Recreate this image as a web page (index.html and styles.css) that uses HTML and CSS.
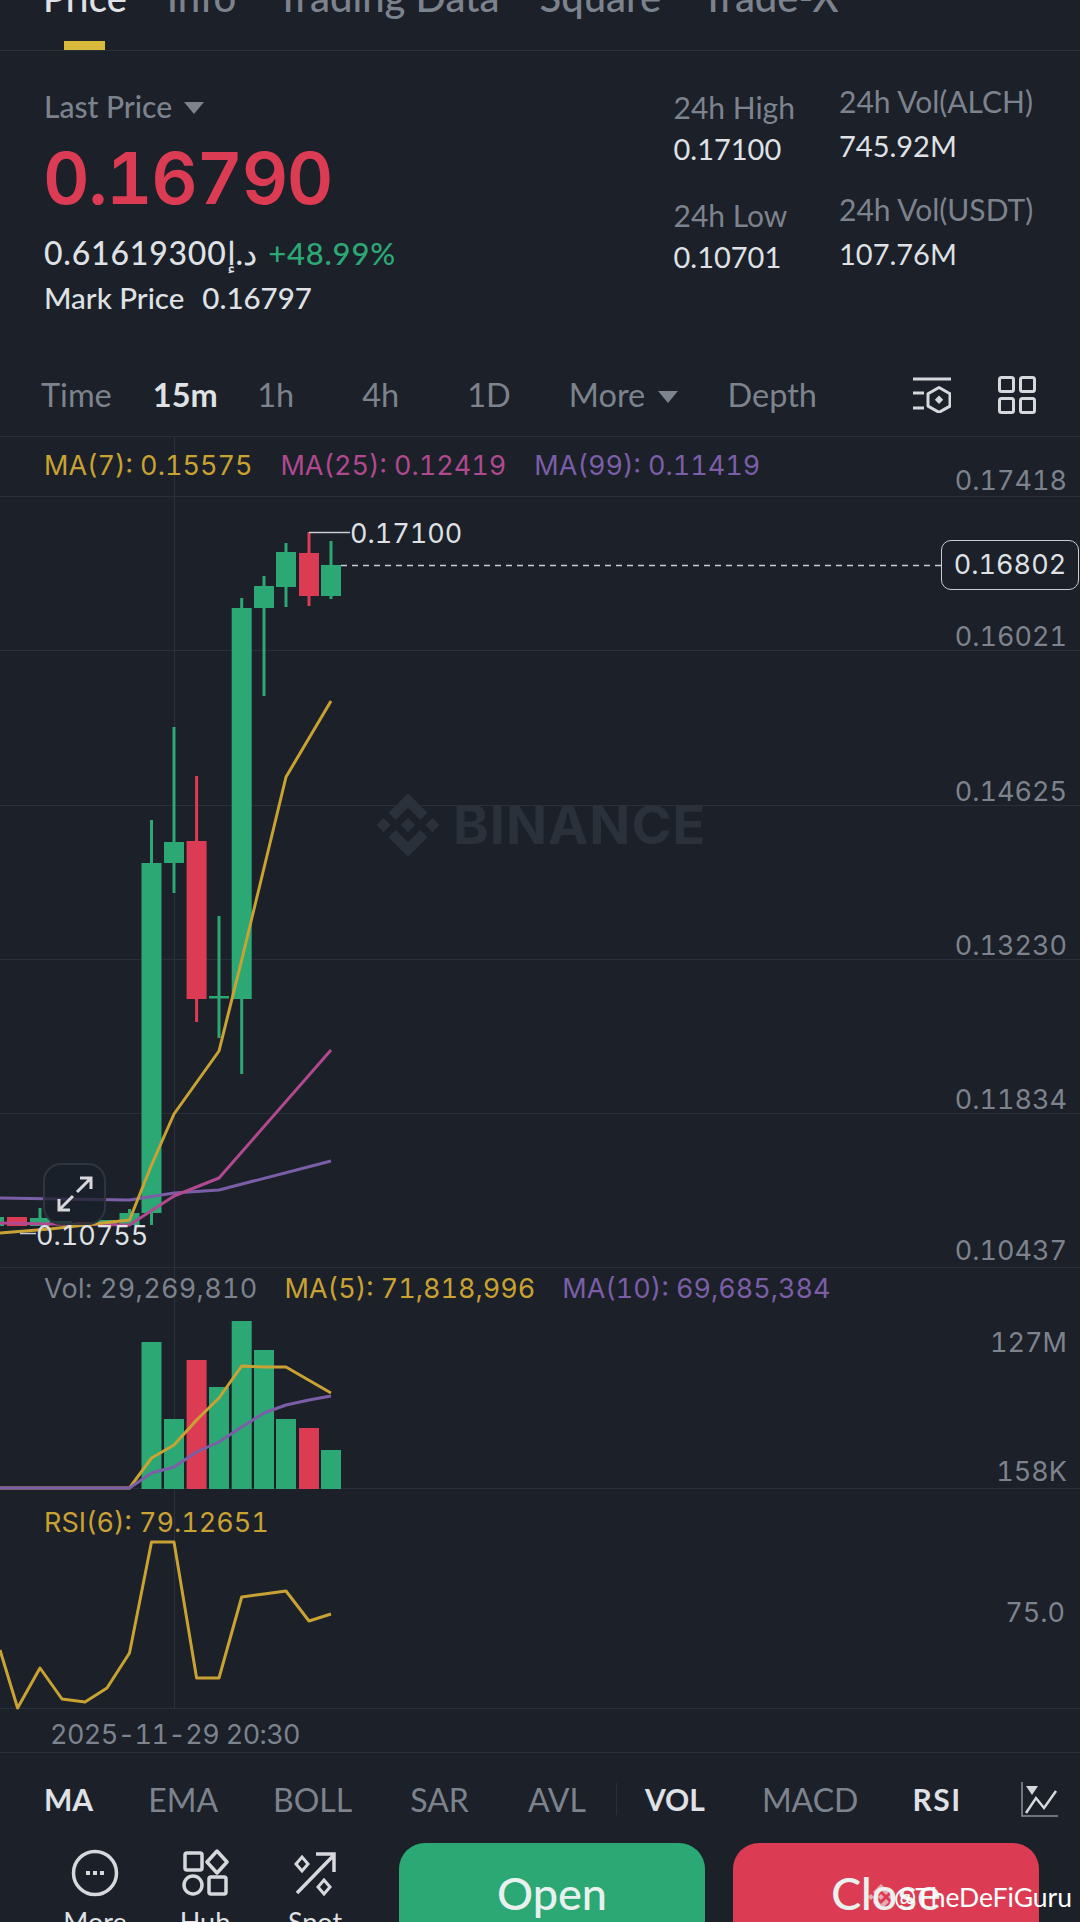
FILE: index.html
```html
<!DOCTYPE html>
<html lang="en">
<head>
  <meta charset="UTF-8">
  <title>ALCH/USDT Price</title>
  <link rel="stylesheet" href="styles.css">
</head>
<body>
  <nav class="tabs">
    <span class="tab active">Price</span>
    <span class="tab">Info</span>
    <span class="tab">Trading Data</span>
    <span class="tab">Square</span>
    <span class="tab">Trade-X</span>
  </nav>

  <section class="ticker">
    <div class="ticker-main">
      <div class="last-label">Last Price <i class="caret"></i></div>
      <div class="last-price">0.16790</div>
      <div class="fiat-row"><span class="fiat-value">0.61619300</span><span class="fiat-cur">د.إ</span><span class="up">+48.99%</span></div>
      <div class="mark-row"><span>Mark Price</span><span>0.16797</span></div>
    </div>
    <div class="stats stats-low">
      <div class="stat"><span class="stat-name">24h High</span><span class="stat-value">0.17100</span></div>
      <div class="stat"><span class="stat-name">24h Low</span><span class="stat-value">0.10701</span></div>
    </div>
    <div class="stats stats-vol">
      <div class="stat"><span class="stat-name">24h Vol(ALCH)</span><span class="stat-value">745.92M</span></div>
      <div class="stat"><span class="stat-name">24h Vol(USDT)</span><span class="stat-value">107.76M</span></div>
    </div>
  </section>

  <div class="intervals">
    <span class="iv iv-time">Time</span>
    <span class="iv iv-15m active">15m</span>
    <span class="iv iv-1h">1h</span>
    <span class="iv iv-4h">4h</span>
    <span class="iv iv-1d">1D</span>
    <span class="iv iv-more">More <i class="caret"></i></span>
    <span class="iv iv-depth">Depth</span>
    <svg class="icon-settings" width="38" height="36" viewBox="0 0 38 36" fill="none" stroke="#d6d8dc" stroke-width="3">
      <path d="M0 2h38M0 16h11M0 31h11"/>
      <path d="M26 10.5l11 6.2v12.4l-11 6.2-11-6.2V16.700z" stroke-linejoin="round"/>
      <path d="M26 18.500l4.200 4.200-4.200 4.200-4.200-4.200z" fill="#d6d8dc" stroke="none"/>
    </svg>
    <svg class="icon-grid" width="38" height="38" viewBox="0 0 38 38" fill="none" stroke="#d6d8dc" stroke-width="3">
      <rect x="1.500" y="1.500" width="14" height="14" rx="2"/>
      <rect x="22.500" y="1.500" width="14" height="14" rx="2"/>
      <rect x="1.500" y="22.500" width="14" height="14" rx="2"/>
      <rect x="22.500" y="22.500" width="14" height="14" rx="2"/>
    </svg>
  </div>

  <section class="chart">
    <!-- chart drawn in page coordinates -->
    <svg class="chart-canvas" width="1080" height="1316" viewBox="0 437 1080 1316">
      <path d="M174.500 437V1709" stroke="#2b313b" stroke-width="1"/>

      <g transform="translate(408 825) scale(.5) translate(-63.300 -63.300)" fill="#2b313b">
        <path d="M38.730 53.200l24.590-24.580 24.600 24.600 14.300-14.310L63.320 0 24.420 38.900zM0 63.310l14.300-14.310 14.310 14.310-14.310 14.300zM38.730 73.410l24.590 24.590 24.600-24.600 14.310 14.290-38.900 38.910-38.910-38.880-.02-.02zM98 63.310l14.300-14.310 14.310 14.300-14.310 14.320zM77.830 63.300L63.320 48.780 52.590 59.510l-1.240 1.230-2.540 2.540 14.510 14.500 14.510-14.470z"/>
      </g>

      <g fill="#2ca875">
        <rect x="-4" y="1217" width="8" height="9"/>
        <rect x="30" y="1218" width="20" height="8"/><rect x="38.500" y="1208" width="3" height="10"/>
        <rect x="52" y="1221" width="20" height="4"/>
        <rect x="97" y="1220" width="20" height="5"/>
        <rect x="119.500" y="1213" width="20" height="12"/><rect x="128" y="1209" width="3" height="5"/>
        <rect x="141.500" y="863" width="20" height="350"/><rect x="150" y="820" width="3" height="405"/>
        <rect x="164" y="842" width="20" height="21"/><rect x="172.500" y="727" width="3" height="166"/>
        <rect x="209" y="996" width="20" height="2.500"/><rect x="217.500" y="916" width="3" height="122"/>
        <rect x="231.700" y="608" width="20" height="391"/><rect x="240.200" y="598" width="3" height="476"/>
        <rect x="254" y="586" width="20" height="22"/><rect x="262.500" y="576" width="3" height="120"/>
        <rect x="276" y="552" width="20" height="35"/><rect x="284.500" y="543" width="3" height="64"/>
        <rect x="321" y="565" width="20" height="31"/><rect x="329.500" y="541" width="3" height="58"/>
      </g>
      <g fill="#dc3c53">
        <rect x="7" y="1217" width="20" height="9"/>
        <rect x="75" y="1222" width="20" height="3"/>
        <rect x="186.600" y="841" width="20" height="158"/><rect x="195.100" y="776" width="3" height="246"/>
        <rect x="299" y="553" width="20" height="43"/><rect x="307.500" y="532" width="3" height="74"/>
      </g>

      <g fill="none" stroke-width="3" stroke-linejoin="round">
        <polyline stroke="#7b5ea7" points="0,1198 60,1199 129.500,1200 174,1193 219,1190 331,1161"/>
        <polyline stroke="#b0498f" points="0,1223 50,1224 129.500,1225 174,1196 219,1178 331,1050"/>
        <polyline stroke="#c9a233" points="0,1233 50,1229 129.500,1220 151.500,1165 174,1114 219,1051 241.700,960 264,868 286,777 331,701"/>

        <path d="M309 532.500h41M20 1233.500h16" stroke="#c9ccd1" stroke-width="1.500"/>
        <path d="M341 565.500H941" stroke="#c9ccd1" stroke-width="1.500" stroke-dasharray="6 5"/>
      </g>

      <g fill="#2ca875">
        <rect x="141.500" y="1342" width="20" height="147"/>
        <rect x="164" y="1419" width="20" height="70"/>
        <rect x="209" y="1387" width="20" height="102"/>
        <rect x="231.700" y="1321" width="20" height="168"/>
        <rect x="254" y="1350" width="20" height="139"/>
        <rect x="276" y="1419" width="20" height="70"/>
        <rect x="321" y="1450" width="20" height="39"/>
      </g>
      <g fill="#dc3c53">
        <rect x="186.600" y="1360" width="20" height="129"/>
        <rect x="299" y="1428" width="20" height="61"/>
      </g>
      <g fill="none" stroke-width="3" stroke-linejoin="round">
        <polyline stroke="#c9a233" points="0,1488 129.500,1488 151.500,1458 174,1445 196.600,1420 219,1398 241.700,1366 264,1367 286,1367 331,1393"/>
        <polyline stroke="#7b5ea7" points="0,1488 129.500,1488 151.500,1473 174,1467 196.600,1452 219,1442 241.700,1427 264,1413 286,1405 309,1400 331,1396"/>
        <polyline stroke="#c9a233" points="0,1650 17.600,1708 40,1668 62,1699 85,1702 107,1688 129.500,1653 151.500,1542 174,1542 196.600,1678 219,1678 241.700,1597 264,1594 286,1591 309,1621 331,1614"/>
      </g>
    </svg>

    <div class="watermark-text">BINANCE</div>

    <div class="panel-main">
      <div class="row row-first">
        <div class="legend">
          <span class="ma7">MA(7): 0.15575</span>
          <span class="ma25">MA(25): 0.12419</span>
          <span class="ma99">MA(99): 0.11419</span>
        </div>
        <span class="axis">0.17418</span>
      </div>
      <div class="row"><span class="axis">0.16021</span></div>
      <div class="row"><span class="axis">0.14625</span></div>
      <div class="row"><span class="axis">0.13230</span></div>
      <div class="row"><span class="axis">0.11834</span></div>
      <div class="row"><span class="axis">0.10437</span></div>
    </div>

    <div class="panel-vol">
      <div class="legend legend-vol">
        <span class="grey">Vol: 29,269,810</span>
        <span class="ma7">MA(5): 71,818,996</span>
        <span class="ma99">MA(10): 69,685,384</span>
      </div>
      <div class="vol-axis"><span class="axis">127M</span><span class="axis">158K</span></div>
    </div>

    <div class="panel-rsi">
      <div class="legend legend-rsi"><span class="ma7">RSI(6): 79.12651</span></div>
      <div class="rsi-axis"><span class="axis">75.0</span></div>
    </div>

    <div class="date-row">2025-11-29 20:30</div>

    <span class="price-label high-label">0.17100</span>
    <span class="price-label low-label">0.10755</span>
    <span class="price-tag">0.16802</span>
    <div class="expand">
      <svg width="36" height="36" viewBox="0 0 36 36" fill="none" stroke="#d6d8dc" stroke-width="3">
        <path d="M20 16L34 2M23 2h11v11M16 20L2 34M13 34H2V23"/>
      </svg>
    </div>
  </section>

  <div class="indicators">
    <span class="ind ind-on ind-ma">MA</span>
    <span class="ind ind-ema">EMA</span>
    <span class="ind ind-boll">BOLL</span>
    <span class="ind ind-sar">SAR</span>
    <span class="ind ind-avl">AVL</span>
    <i class="ind-divider"></i>
    <span class="ind ind-on ind-vol">VOL</span>
    <span class="ind ind-macd">MACD</span>
    <span class="ind ind-on ind-rsi">RSI</span>
    <svg class="icon-ind" width="38" height="36" viewBox="0 0 38 36" fill="none" stroke="#d6d8dc">
      <path d="M1 1v34h36" stroke="#8a8f98" stroke-width="1.500"/>
      <path d="M5 5h12l-6 9z" fill="#d6d8dc" stroke="none"/>
      <path d="M5 32l10-15 8 10 12-17" stroke-width="2.500"/>
    </svg>
  </div>

  <footer class="actions">
    <div class="action">
      <svg width="48" height="48" viewBox="0 0 48 48" fill="none" stroke="#d6d8dc" stroke-width="3.500">
        <circle cx="24" cy="24" r="21.500"/>
        <path d="M15 24h4M22 24h4M29 24h4" stroke-width="4"/>
      </svg>
      <span>More</span>
    </div>
    <div class="action">
      <svg width="48" height="48" viewBox="0 0 48 48" fill="none" stroke="#d6d8dc" stroke-width="3.500">
        <rect x="4" y="4" width="17" height="17" rx="2"/>
        <path d="M36 2l10 11-10 11-10-11z" stroke-linejoin="round"/>
        <circle cx="12" cy="36" r="9"/>
        <rect x="28" y="28" width="17" height="17" rx="2"/>
      </svg>
      <span>Hub</span>
    </div>
    <div class="action">
      <svg width="48" height="48" viewBox="0 0 48 48" fill="none" stroke="#d6d8dc" stroke-width="3.500">
        <path d="M6 44L43 6M25 5h18v18"/>
        <path d="M11 8l6 7-6 7-6-7zM33 31l6 7-6 7-6-7z" stroke-width="3"/>
      </svg>
      <span>Spot</span>
    </div>
    <button class="btn btn-open">Open</button>
    <button class="btn btn-close">Close</button>
    <div class="credit">
      <svg width="26" height="26" viewBox="0 0 126.610 126.610" fill="#f2f2f2">
        <path d="M38.730 53.200l24.590-24.580 24.600 24.600 14.300-14.310L63.320 0 24.420 38.900zM0 63.310l14.300-14.310 14.310 14.310-14.310 14.300zM38.730 73.410l24.590 24.590 24.600-24.600 14.310 14.290-38.900 38.910-38.910-38.880-.02-.02zM98 63.310l14.300-14.310 14.310 14.300-14.310 14.320zM77.830 63.300L63.320 48.780 52.590 59.510l-1.240 1.230-2.540 2.540 14.510 14.500 14.510-14.470z"/>
      </svg>
      <span>@TheDeFiGuru</span>
    </div>
  </footer>
</body>
</html>
```

FILE: styles.css
```css
* {
  margin: 0;
  padding: 0;
  box-sizing: border-box;
}

:root {
  --bg: #1b2029;
  --line: #2a303a;
  --grey: #7d838d;
  --light: #dfe1e4;
  --green: #2ca875;
  --red: #dc3c53;
  --yellow: #c9a233;
  --magenta: #b0498f;
  --purple: #7b5ea7;
}

html, body {
  width: 1080px;
  height: 1922px;
  overflow: hidden;
}

body {
  font-family: Lato, "Noto Sans", sans-serif;
  background-color: var(--bg);
  color: var(--light);
}

i {
  font-style: normal;
}

.tabs {
  height: 51px;
  border-bottom: 1.5px solid var(--line);
  display: flex;
  gap: 40px;
  padding-left: 43px;
  position: relative;
  overflow: hidden;
}

.tab {
  font-size: 40px;
  line-height: 40px;
  margin-top: -23px;
  color: var(--grey);
  font-weight: 500;
}

.tab.active {
  font-size: 38px;
  color: var(--light);
}

.tab.active::after {
  content: "";
  position: absolute;
  left: 64px;
  bottom: 0;
  width: 41px;
  height: 9px;
  background-color: #d8b93a;
}

.caret {
  display: inline-block;
  width: 0;
  height: 0;
  border-left: 10px solid transparent;
  border-right: 10px solid transparent;
  border-top: 12px solid var(--grey);
  vertical-align: 4px;
  margin-left: 4px;
}

.ticker {
  height: 294px;
  display: flex;
  padding: 0 0 0 44px;
}

.ticker-main {
  width: 629.500px;
  padding-top: 38px;
}

.last-label {
  font-size: 30px;
  line-height: 34px;
  color: var(--grey);
  font-weight: 500;
}

.last-price {
  font-family: Inter, sans-serif;
  font-variant-numeric: tabular-nums;
  font-size: 72px;
  line-height: 88px;
  font-weight: 600;
  letter-spacing: -1.4px;
  color: var(--red);
  margin: 11px 0 0 -1px;
}

.fiat-row {
  display: flex;
  font-size: 31px;
  line-height: 36px;
  font-weight: 500;
  letter-spacing: .8px;
  margin-top: 13px;
}

.fiat-value {
  font-size: 32px;
  letter-spacing: .8px;
}

.fiat-cur {
  font-size: 32px;
  margin-right: 11px;
}

.up {
  color: var(--green);
}

.mark-row {
  display: flex;
  gap: 18px;
  font-size: 29.500px;
  line-height: 34px;
  font-weight: 500;
  margin-top: 10px;
}

.stats {
  width: 200px;
  padding-top: 33px;
}

.stats-low {
  width: 165.500px;
  padding-top: 39px;
}

.stat {
  display: flex;
  flex-direction: column;
  height: 108px;
  font-size: 30px;
  line-height: 34px;
}

.stat-name {
  color: var(--grey);
}

.stat-value {
  margin-top: 8px;
  font-size: 29px;
}

.stats-vol .stat-value {
  margin-top: 11px;
}

.intervals {
  height: 92px;
  padding-top: 8px;
  border-bottom: 1.5px solid var(--line);
  display: flex;
  align-items: center;
  position: relative;
  font-size: 32.500px;
  color: var(--grey);
}

.iv.active {
  color: var(--light);
  font-weight: 700;
}

.iv-time { margin-left: 41px; }
.iv-15m { margin-left: 41px; }
.iv-1h { margin-left: 39.500px; }
.iv-4h { margin-left: 68px; }
.iv-1d { margin-left: 68px; }
.iv-more { margin-left: 58px; }
.iv-depth { margin-left: 50px; }

.icon-settings { margin-left: 96px; }
.icon-grid { margin-left: 47px; }

.chart {
  height: 1316px;
  position: relative;
}

.chart-canvas {
  position: absolute;
  left: 0;
  top: 0;
}

.legend {
  display: flex;
  gap: 28px;
  font-family: Inter, sans-serif;
  font-variant-numeric: tabular-nums;
  font-size: 27px;
  line-height: 32px;
  padding-left: 44px;
  position: relative;
}

.legend-vol {
  top: 1px;
  gap: 27px;
}

.ma7 { color: var(--yellow); }
.ma25 { color: var(--magenta); }
.ma99 { color: var(--purple); }
.grey { color: var(--grey); letter-spacing: .3px; }

.axis {
  font-family: Inter, sans-serif;
  font-variant-numeric: tabular-nums;
  font-size: 27px;
  line-height: 32px;
  color: var(--grey);
  position: relative;
}

.row {
  height: 154.300px;
  border-bottom: 1.500px solid var(--line);
  display: flex;
  justify-content: space-between;
  align-items: flex-end;
  padding-right: 13px;
}

.row .axis:only-child {
  margin-left: auto;
  top: 3px;
}

.row:last-child .axis {
  top: 0;
}

.row-first {
  height: 60px;
}

.row-first .axis {
  top: 1px;
}

.row-first .legend {
  align-self: flex-start;
  padding-top: 13px;
}

.panel-vol {
  height: 221px;
  border-bottom: 1.500px solid var(--line);
  padding-top: 4px;
  display: flex;
  flex-direction: column;
}

.vol-axis {
  display: flex;
  flex-direction: column;
  align-items: flex-end;
  justify-content: space-between;
  flex: 1;
  padding: 23px 13px 0 0;
}

.panel-rsi {
  height: 220px;
  border-bottom: 1.500px solid var(--line);
  padding-top: 18px;
}

.rsi-axis {
  display: flex;
  justify-content: flex-end;
  padding: 58px 15px 0 0;
}

.date-row {
  height: 44px;
  line-height: 52px;
  padding-left: 50px;
  font-family: Inter, sans-serif;
  font-variant-numeric: tabular-nums;
  font-size: 27px;
  letter-spacing: -.6px;
  color: var(--grey);
  border-bottom: 1.500px solid var(--line);
  position: relative;
}

.watermark-text {
  position: absolute;
  left: 453px;
  top: 361px;
  font-family: Inter, sans-serif;
  font-weight: 700;
  font-size: 54px;
  line-height: 54px;
  letter-spacing: 1px;
  color: #2b313b;
}

.price-label {
  position: absolute;
  font-family: Inter, sans-serif;
  font-variant-numeric: tabular-nums;
  font-size: 27px;
  line-height: 32px;
  color: var(--light);
}

.high-label {
  left: 350px;
  top: 81px;
}

.low-label {
  left: 36px;
  top: 783px;
}

.price-tag {
  position: absolute;
  left: 941px;
  top: 103px;
  width: 138px;
  height: 50px;
  border: 1.500px solid #c9ccd1;
  border-radius: 10px;
  background-color: var(--bg);
  font-family: Inter, sans-serif;
  font-variant-numeric: tabular-nums;
  font-size: 27px;
  line-height: 47px;
  text-align: center;
}

.expand {
  position: absolute;
  left: 43px;
  top: 726px;
  width: 63px;
  height: 62px;
  border: 2.500px solid #2f353f;
  border-radius: 18px;
  background-color: rgba(27, 32, 41, .75);
  display: flex;
  align-items: center;
  justify-content: center;
}

.indicators {
  height: 90px;
  padding-top: 2px;
  display: flex;
  align-items: center;
  font-size: 32px;
  color: var(--grey);
  position: relative;
}

.ind-ma { margin-left: 44px; }
.ind-ema { margin-left: 55px; }
.ind-boll { margin-left: 55px; }
.ind-sar { margin-left: 58px; }
.ind-avl { margin-left: 59px; }
.ind-vol { margin-left: 28px; }
.ind-macd { margin-left: 57px; }
.ind-rsi { margin-left: 54px; letter-spacing: 1.5px; }

.ind-on {
  font-size: 30px;
  color: var(--light);
  font-weight: 700;
}

.ind-divider {
  width: 1px;
  height: 32px;
  background-color: var(--line);
  margin-left: 30px;
}

.icon-ind { margin-left: 59px; }

.actions {
  display: flex;
  align-items: flex-start;
  padding-left: 40px;
  position: relative;
}

.action {
  width: 110px;
  padding-top: 6px;
  display: flex;
  flex-direction: column;
  align-items: center;
  font-size: 27px;
  color: var(--light);
}

.action span {
  margin-top: 8px;
}

.btn {
  width: 306px;
  height: 104px;
  padding-bottom: 4px;
  border: none;
  border-radius: 26px;
  font-family: inherit;
  font-size: 45px;
  font-weight: 500;
  color: #e8f1ee;
}

.btn-open {
  background-color: var(--green);
  margin-left: 29px;
}

.btn-close {
  background-color: var(--red);
  margin-left: 28px;
}

.credit {
  position: absolute;
  right: 8px;
  top: 38px;
  display: flex;
  align-items: center;
  font-size: 26.500px;
  color: #fff;
}

.credit svg {
  opacity: .6;
}
```
